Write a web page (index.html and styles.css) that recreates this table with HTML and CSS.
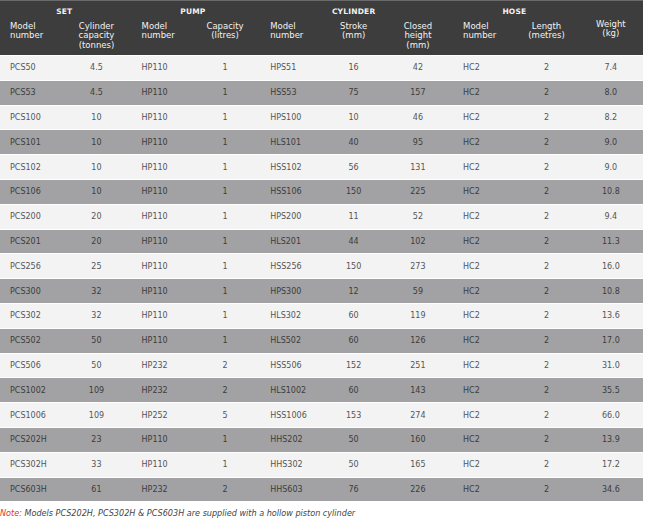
FILE: index.html
```html
<!DOCTYPE html>
<html>
<head>
<meta charset="utf-8">
<link rel="stylesheet" href="styles.css">
</head>
<body>
<table class="spec">
  <colgroup>
    <col><col><col><col><col><col><col><col><col><col>
  </colgroup>
  <thead>
    <tr class="group">
      <th colspan="2">SET</th>
      <th colspan="2">PUMP</th>
      <th colspan="3">CYLINDER</th>
      <th colspan="2">HOSE</th>
      <th rowspan="2" class="weight">Weight<br>(kg)</th>
    </tr>
    <tr class="sub">
      <th class="l first">Model<br>number</th>
      <th>Cylinder<br>capacity<br>(tonnes)</th>
      <th class="l">Model<br>number</th>
      <th>Capacity<br>(litres)</th>
      <th class="l">Model<br>number</th>
      <th>Stroke<br>(mm)</th>
      <th>Closed<br>height<br>(mm)</th>
      <th class="l">Model<br>number</th>
      <th>Length<br>(metres)</th>
    </tr>
  </thead>
  <tbody>
    <tr><td class="l first">PCS50</td><td>4.5</td><td class="l">HP110</td><td>1</td><td class="l">HPS51</td><td>16</td><td>42</td><td class="l">HC2</td><td>2</td><td>7.4</td></tr>
    <tr><td class="l first">PCS53</td><td>4.5</td><td class="l">HP110</td><td>1</td><td class="l">HSS53</td><td>75</td><td>157</td><td class="l">HC2</td><td>2</td><td>8.0</td></tr>
    <tr><td class="l first">PCS100</td><td>10</td><td class="l">HP110</td><td>1</td><td class="l">HPS100</td><td>10</td><td>46</td><td class="l">HC2</td><td>2</td><td>8.2</td></tr>
    <tr><td class="l first">PCS101</td><td>10</td><td class="l">HP110</td><td>1</td><td class="l">HLS101</td><td>40</td><td>95</td><td class="l">HC2</td><td>2</td><td>9.0</td></tr>
    <tr><td class="l first">PCS102</td><td>10</td><td class="l">HP110</td><td>1</td><td class="l">HSS102</td><td>56</td><td>131</td><td class="l">HC2</td><td>2</td><td>9.0</td></tr>
    <tr><td class="l first">PCS106</td><td>10</td><td class="l">HP110</td><td>1</td><td class="l">HSS106</td><td>150</td><td>225</td><td class="l">HC2</td><td>2</td><td>10.8</td></tr>
    <tr><td class="l first">PCS200</td><td>20</td><td class="l">HP110</td><td>1</td><td class="l">HPS200</td><td>11</td><td>52</td><td class="l">HC2</td><td>2</td><td>9.4</td></tr>
    <tr><td class="l first">PCS201</td><td>20</td><td class="l">HP110</td><td>1</td><td class="l">HLS201</td><td>44</td><td>102</td><td class="l">HC2</td><td>2</td><td>11.3</td></tr>
    <tr><td class="l first">PCS256</td><td>25</td><td class="l">HP110</td><td>1</td><td class="l">HSS256</td><td>150</td><td>273</td><td class="l">HC2</td><td>2</td><td>16.0</td></tr>
    <tr><td class="l first">PCS300</td><td>32</td><td class="l">HP110</td><td>1</td><td class="l">HPS300</td><td>12</td><td>59</td><td class="l">HC2</td><td>2</td><td>10.8</td></tr>
    <tr><td class="l first">PCS302</td><td>32</td><td class="l">HP110</td><td>1</td><td class="l">HLS302</td><td>60</td><td>119</td><td class="l">HC2</td><td>2</td><td>13.6</td></tr>
    <tr><td class="l first">PCS502</td><td>50</td><td class="l">HP110</td><td>1</td><td class="l">HLS502</td><td>60</td><td>126</td><td class="l">HC2</td><td>2</td><td>17.0</td></tr>
    <tr><td class="l first">PCS506</td><td>50</td><td class="l">HP232</td><td>2</td><td class="l">HSS506</td><td>152</td><td>251</td><td class="l">HC2</td><td>2</td><td>31.0</td></tr>
    <tr><td class="l first">PCS1002</td><td>109</td><td class="l">HP232</td><td>2</td><td class="l">HLS1002</td><td>60</td><td>143</td><td class="l">HC2</td><td>2</td><td>35.5</td></tr>
    <tr><td class="l first">PCS1006</td><td>109</td><td class="l">HP252</td><td>5</td><td class="l">HSS1006</td><td>153</td><td>274</td><td class="l">HC2</td><td>2</td><td>66.0</td></tr>
    <tr><td class="l first">PCS202H</td><td>23</td><td class="l">HP110</td><td>1</td><td class="l">HHS202</td><td>50</td><td>160</td><td class="l">HC2</td><td>2</td><td>13.9</td></tr>
    <tr><td class="l first">PCS302H</td><td>33</td><td class="l">HP110</td><td>1</td><td class="l">HHS302</td><td>50</td><td>165</td><td class="l">HC2</td><td>2</td><td>17.2</td></tr>
    <tr><td class="l first">PCS603H</td><td>61</td><td class="l">HP232</td><td>2</td><td class="l">HHS603</td><td>76</td><td>226</td><td class="l">HC2</td><td>2</td><td>34.6</td></tr>
  </tbody>
</table>
<p class="note"><span class="note-label">Note:</span> Models PCS202H, PCS302H &amp; PCS603H are supplied with a hollow piston cylinder</p>
</body>
</html>
```

FILE: styles.css
```css
html, body {
  margin: 0;
  padding: 0;
  background: #ffffff;
}

body {
  font-family: "DejaVu Sans", "Liberation Sans", sans-serif;
}

.spec {
  width: 643px;
  border-collapse: collapse;
  table-layout: fixed;
  border-spacing: 0;
}

.spec col {
  width: 10%;
}

.spec thead th {
  background: #3d3d3d;
  color: #f2f2f2;
  font-weight: normal;
  padding: 0;
  text-align: center;
}

.spec .group th {
  height: 18px;
  font-size: 7.5px;
  font-weight: bold;
  letter-spacing: 0.2px;
  vertical-align: middle;
  padding-top: 3px;
  box-sizing: border-box;
  border-top: 1px solid #6a6a6a;
}

.spec .group th.weight {
  font-size: 8.5px;
  font-weight: normal;
  letter-spacing: 0;
  line-height: 9.5px;
  vertical-align: middle;
  padding-top: 2px;
}

.spec .sub th {
  height: 37px;
  font-size: 8.5px;
  line-height: 9.5px;
  vertical-align: top;
  padding-top: 3px;
  box-sizing: border-box;
}

.spec .l {
  text-align: left;
  padding-left: 13px;
}

.spec .first {
  padding-left: 10px;
}

.spec tbody td {
  height: 23.8px;
  padding: 0;
  font-size: 8px;
  color: #555555;
  text-align: center;
  vertical-align: middle;
  border-top: 1px solid #ffffff;
  background: #f3f3f3;
}

.spec tbody td.l {
  text-align: left;
}

.spec tbody tr:nth-child(even) td {
  background: #a2a2a4;
  color: #3c3c3c;
}

.note {
  margin: 6px 0 0 0;
  font-size: 8.1px;
  line-height: 12px;
  font-style: italic;
  color: #454545;
}

.note-label {
  color: #e2342f;
}
```
